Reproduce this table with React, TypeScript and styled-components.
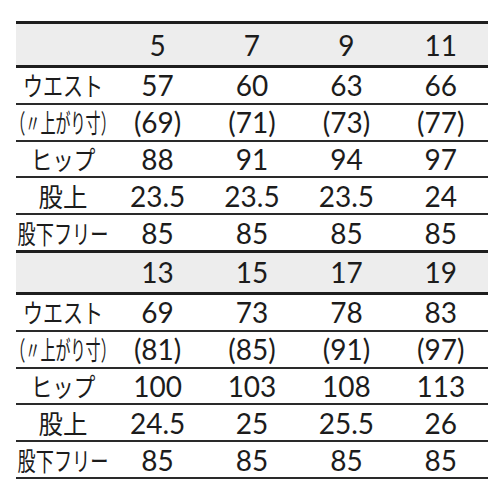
import React from "react";
import styled, { createGlobalStyle } from "styled-components";

const GlobalStyle = createGlobalStyle`
  html, body { margin: 0; padding: 0; background: #ffffff; }
  body { font-family: "Lato", "Noto Sans CJK JP", sans-serif; color: #1c1c1c; }
`;

const Page = styled.div`
  width: 500px;
  padding: 21px 12px 0 16px;
  box-sizing: border-box;
`;

const Block = styled.div<{ $closed?: boolean }>`
  border-top: 3px solid #1e1e1e;
  border-bottom: ${(p) => (p.$closed ? "2px solid #2a2a2a" : "none")};
`;

const HeaderRow = styled.div<{ $h: number }>`
  display: grid;
  grid-template-columns: repeat(5, minmax(0, 1fr));
  align-items: center;
  height: ${(p) => p.$h}px;
  background: #ededed;
  border-bottom: 3px solid #1e1e1e;
`;

const DataRow = styled.div`
  display: grid;
  grid-template-columns: repeat(5, minmax(0, 1fr));
  align-items: center;
  height: 36.8px;
  box-sizing: border-box;
  border-bottom: 2px solid #2a2a2a;
  &:last-child {
    border-bottom: none;
    height: 34.8px;
  }
`;

const Cell = styled.div`
  display: flex;
  align-items: center;
  justify-content: center;
  height: 100%;
  min-width: 0;
  font-family: "Lato", sans-serif;
  font-size: 28px;
  font-weight: 400;
  line-height: 1;
  color: #1c1c1c;
  white-space: nowrap;
`;

const LabelCell = styled.div`
  display: flex;
  align-items: center;
  justify-content: center;
  height: 100%;
  min-width: 0;
  overflow: visible;
`;

const Label = styled.span<{ $sx: number }>`
  display: inline-block;
  flex: none;
  font-family: "Noto Sans CJK JP", sans-serif;
  font-size: 26px;
  font-weight: 400;
  line-height: 1;
  color: #1c1c1c;
  white-space: nowrap;
  transform: scaleX(${(p) => p.$sx});
`;

type RowDef = { label: string; sx: number; values: string[] };

const labels = [
  { label: "ウエスト", sx: 0.77 },
  { label: "（〃上がり寸）", sx: 0.58 },
  { label: "ヒップ", sx: 0.83 },
  { label: "股上", sx: 0.94 },
  { label: "股下フリー", sx: 0.7 },
];

const blocks: { sizes: string[]; h: number; values: string[][] }[] = [
  {
    sizes: ["5", "7", "9", "11"],
    h: 41,
    values: [
      ["57", "60", "63", "66"],
      ["(69)", "(71)", "(73)", "(77)"],
      ["88", "91", "94", "97"],
      ["23.5", "23.5", "23.5", "24"],
      ["85", "85", "85", "85"],
    ],
  },
  {
    sizes: ["13", "15", "17", "19"],
    h: 39,
    values: [
      ["69", "73", "78", "83"],
      ["(81)", "(85)", "(91)", "(97)"],
      ["100", "103", "108", "113"],
      ["24.5", "25", "25.5", "26"],
      ["85", "85", "85", "85"],
    ],
  },
];

export default function App() {
  return (
    <>
      <GlobalStyle />
      <Page>
        {blocks.map((b, bi) => {
          const rows: RowDef[] = labels.map((l, i) => ({ ...l, values: b.values[i] }));
          return (
            <Block key={bi} $closed={bi === blocks.length - 1}>
              <HeaderRow $h={b.h}>
                <Cell />
                {b.sizes.map((s) => (
                  <Cell key={s}>{s}</Cell>
                ))}
              </HeaderRow>
              {rows.map((r) => (
                <DataRow key={r.label}>
                  <LabelCell>
                    <Label $sx={r.sx}>{r.label}</Label>
                  </LabelCell>
                  {r.values.map((v, vi) => (
                    <Cell key={vi}>{v}</Cell>
                  ))}
                </DataRow>
              ))}
            </Block>
          );
        })}
      </Page>
    </>
  );
}
